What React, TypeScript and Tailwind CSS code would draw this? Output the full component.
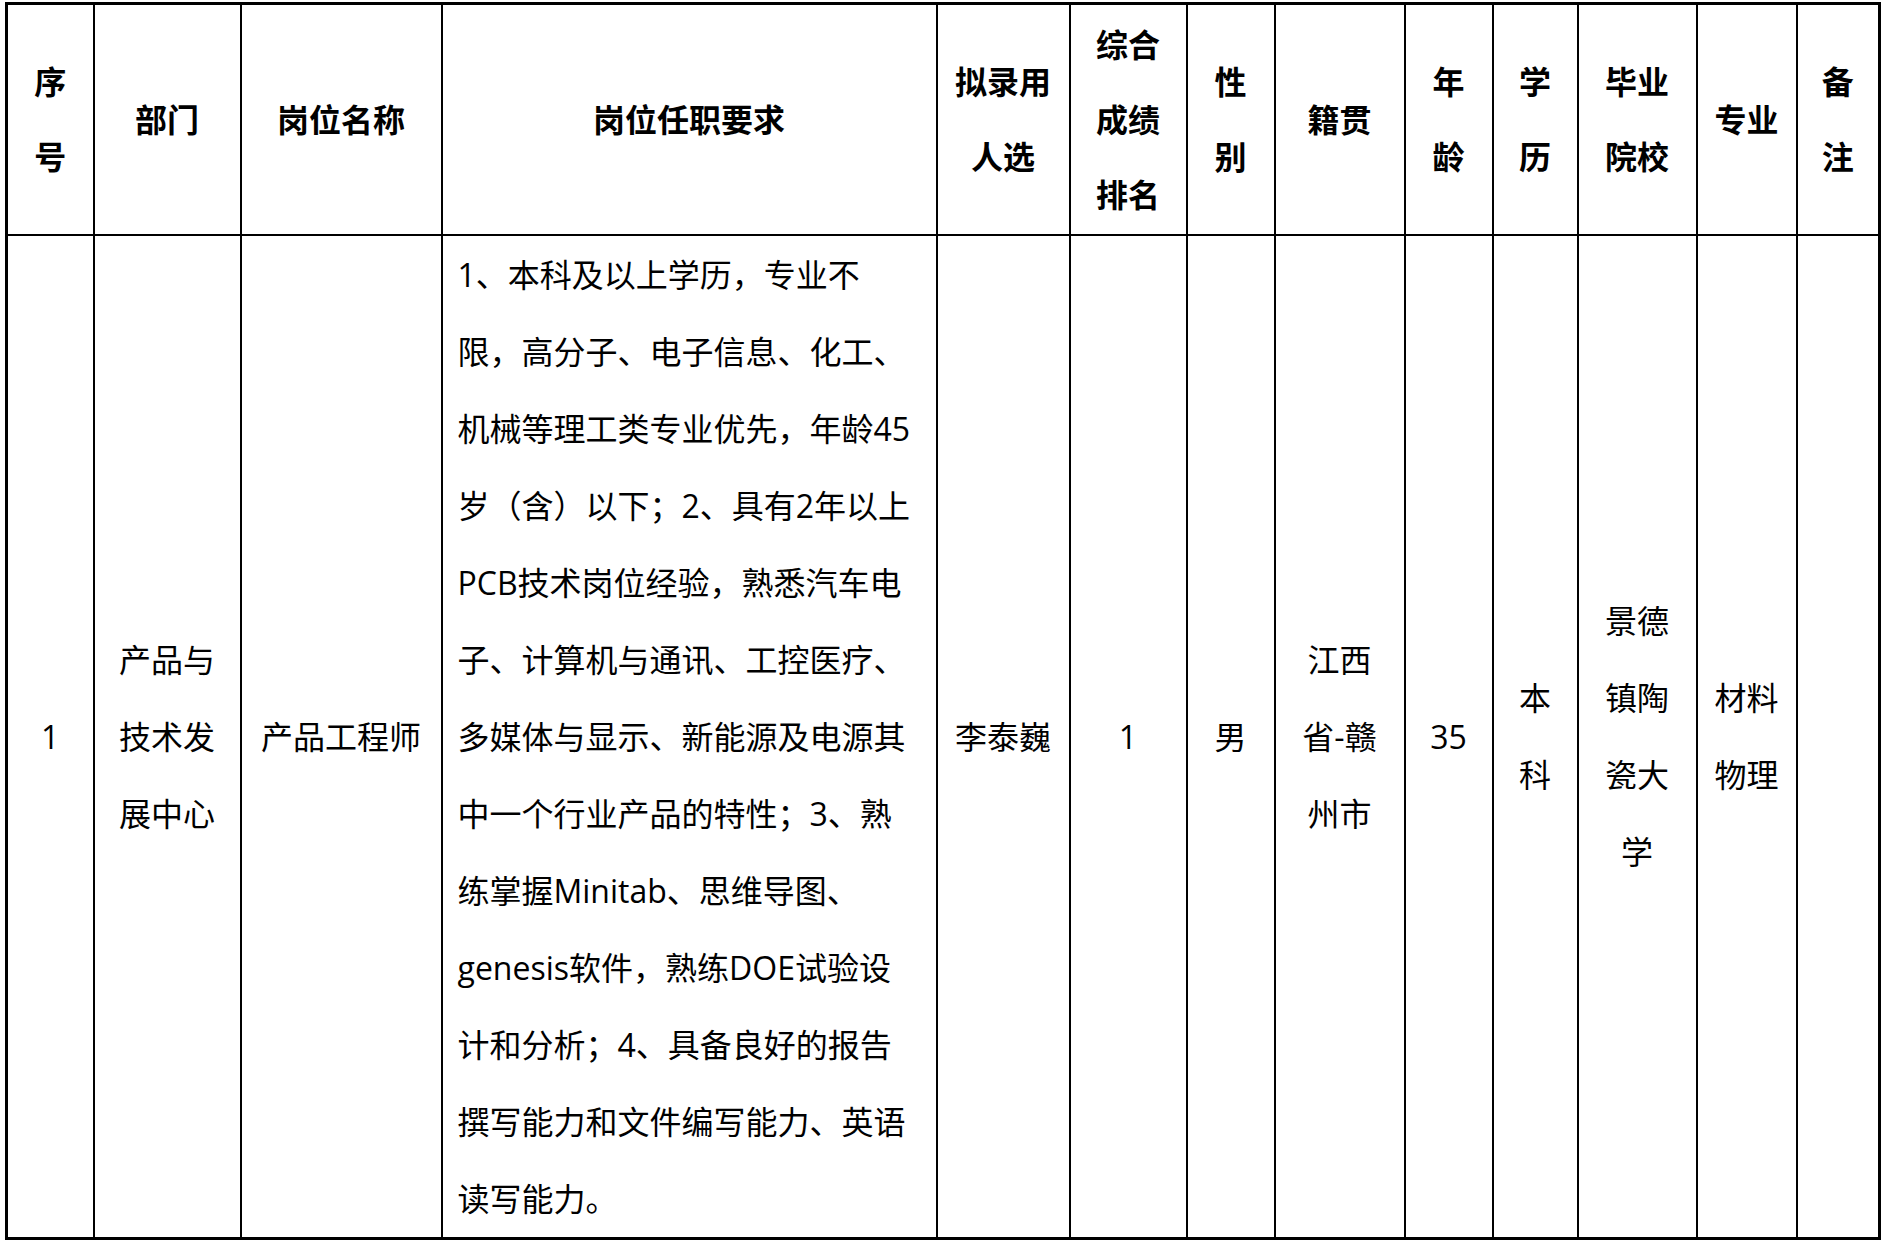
const cols = [87, 147, 201, 495, 133, 117, 88, 130, 88, 85, 119, 100, 83];

const headers: string[][] = [
  ["序", "号"],
  ["部门"],
  ["岗位名称"],
  ["岗位任职要求"],
  ["拟录用", "人选"],
  ["综合", "成绩", "排名"],
  ["性", "别"],
  ["籍贯"],
  ["年", "龄"],
  ["学", "历"],
  ["毕业", "院校"],
  ["专业"],
  ["备", "注"],
];

const requirement = [
  "1、本科及以上学历，专业不",
  "限，高分子、电子信息、化工、",
  "机械等理工类专业优先，年龄45",
  "岁（含）以下；2、具有2年以上",
  "PCB技术岗位经验，熟悉汽车电",
  "子、计算机与通讯、工控医疗、",
  "多媒体与显示、新能源及电源其",
  "中一个行业产品的特性；3、熟",
  "练掌握Minitab、思维导图、",
  "genesis软件，熟练DOE试验设",
  "计和分析；4、具备良好的报告",
  "撰写能力和文件编写能力、英语",
  "读写能力。",
];

const row: string[][] = [
  ["1"],
  ["产品与", "技术发", "展中心"],
  ["产品工程师"],
  requirement,
  ["李泰巍"],
  ["1"],
  ["男"],
  ["江西", "省-赣", "州市"],
  ["35"],
  ["本", "科"],
  ["景德", "镇陶", "瓷大", "学"],
  ["材料", "物理"],
  [],
];

const Lines = ({ lines }: { lines: string[] }) => (
  <>
    {lines.map((l, i) => (
      <div key={i} className="whitespace-nowrap">{l}</div>
    ))}
  </>
);

export default function App() {
  return (
    <div
      className="min-h-screen bg-white pl-[5px] pt-[2px] text-black"
      style={{ fontFamily: "'Open Sans','Noto Sans CJK SC',sans-serif" }}
    >
      <table className="table-fixed border-collapse border-[3px] border-black w-[1875px]">
        <colgroup>
          {cols.map((w, i) => (
            <col key={i} style={{ width: w }} />
          ))}
        </colgroup>
        <thead>
          <tr className="h-[231px]">
            {headers.map((h, i) => (
              <th
                key={i}
                className="border-2 border-black p-0 text-center align-middle text-[32px] font-bold leading-[75px]"
              >
                <Lines lines={h} />
              </th>
            ))}
          </tr>
        </thead>
        <tbody>
          <tr className="h-[1004px]">
            {row.map((c, i) => (
              <td
                key={i}
                className={`border-2 border-black p-0 align-middle text-[32px] leading-[77px] ${
                  i === 3 ? "text-left pl-[15px]" : "text-center"
                }`}
              >
                <Lines lines={c} />
              </td>
            ))}
          </tr>
        </tbody>
      </table>
    </div>
  );
}
